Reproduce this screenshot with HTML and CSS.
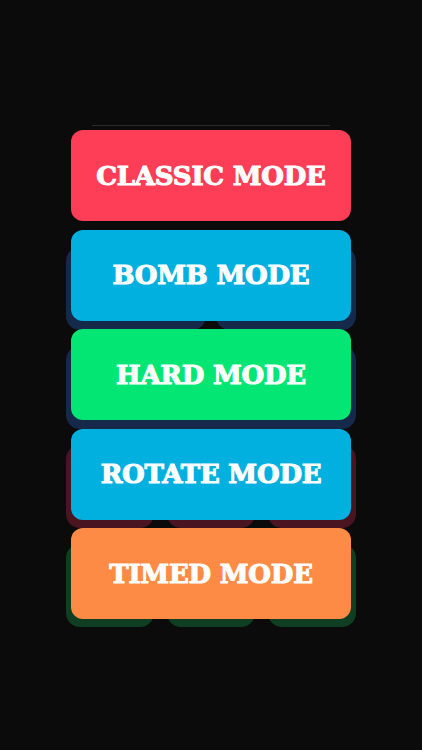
FILE: index.html
```html
<!DOCTYPE html>
<html>
<head>
<meta charset="utf-8">
<link rel="stylesheet" href="styles.css">
</head>
<body>
<div class="screen">
  <div class="tiles">
    <div class="row"><div class="tile blue"></div><div class="tile blue"></div></div>
    <div class="row solid"><div class="tile blue"></div></div>
    <div class="row"><div class="tile red"></div><div class="tile red"></div><div class="tile red"></div></div>
    <div class="row"><div class="tile green"></div><div class="tile green"></div><div class="tile green"></div></div>
  </div>
  <div class="menu">
    <div class="rule"></div>
    <div class="btn classic">CLASSIC MODE</div>
    <div class="btn bomb">BOMB MODE</div>
    <div class="btn hard">HARD MODE</div>
    <div class="btn rotate">ROTATE MODE</div>
    <div class="btn timed">TIMED MODE</div>
  </div>
</div>
</body>
</html>
```
FILE: styles.css
```css
html, body {
  margin: 0;
  padding: 0;
  background: #0b0b0b;
}
.screen {
  position: relative;
  width: 422px;
  height: 750px;
  overflow: hidden;
  background: #0b0b0b;
}
.tiles {
  position: absolute;
  left: 66px;
  top: 247px;
  width: 290px;
  display: flex;
  flex-direction: column;
  gap: 16px;
}
.row {
  display: flex;
  gap: 13px;
  height: 83px;
}
.row:first-child {
  gap: 10px;
}
.tile {
  flex: 1;
  border-radius: 14px;
}
.tile.blue { background: #15294a; }
.tile.red { background: #4a1421; }
.tile.green { background: #0f3e22; }
.menu {
  position: relative;
  padding-top: 125px;
  margin-left: 71px;
  width: 280px;
  display: flex;
  flex-direction: column;
}
.rule {
  height: 1px;
  margin: 0 21px 4px 21px;
  background: #2a2a2c;
}
.btn {
  height: 91px;
  margin-bottom: 8.5px;
  border-radius: 12px;
  display: flex;
  align-items: center;
  justify-content: center;
  color: #ffffff;
  font-family: "DejaVu Serif", "Liberation Serif", serif;
  font-weight: bold;
  font-size: 26px;
  letter-spacing: -0.2px;
  -webkit-text-stroke: 1.1px #ffffff;
}
.classic { background: #fe3d56; }
.bomb { background: #02b0e0; }
.hard { background: #03e673; }
.rotate { background: #02b0e0; }
.timed { background: #fe8b45; }
```
